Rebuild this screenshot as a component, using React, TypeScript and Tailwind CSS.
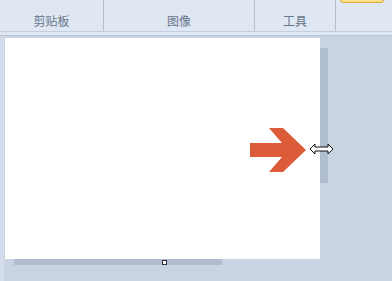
import React from 'react';

const groups = [
  { label: '剪贴板', w: 'w-[104px]' },
  { label: '图像', w: 'w-[151px]' },
  { label: '工具', w: 'w-[81px]' },
  { label: '', w: 'flex-1' },
];

const Ribbon = () => (
  <div className="h-[36px] bg-[#dfe7f2] border-b border-[#b9c6d8]">
    <div className="flex h-[32px] border-b border-[#c3cfdf]">
      {groups.map((g, i) => (
        <div
          key={i}
          className={`${g.w} relative flex items-end justify-center pb-[4px] ${i < 3 ? 'border-r border-[#b3c0d2]' : ''}`}
        >
          {i === 3 && (
            <div className="absolute left-[4px] top-[-6px] h-[9px] w-[44px] rounded-b-[3px] border border-[#d9a93a] bg-[#fbe08a]" />
          )}
          <span className="text-[12px] leading-none text-[#66768c] font-['Noto_Sans_CJK_SC',sans-serif]">{g.label}</span>
        </div>
      ))}
    </div>
  </div>
);

const Arrow = () => (
  <svg width="58" height="46" viewBox="249 127 58 46">
    <polygon
      points="250,143 282,143 269,128 283,128 306,150 283,172 269,172 282,157 250,157"
      fill="#dc5b38"
    />
  </svg>
);

const ResizeCursor = () => (
  <svg width="26" height="14" viewBox="0 0 26 14" className="absolute left-[60px] top-[15px]">
    <path
      d="M1 7 L6 2 L6 5 L19 5 L19 2 L24 7 L19 12 L19 9 L6 9 L6 12 Z"
      fill="#ffffff"
      stroke="#111"
      strokeWidth="1"
    />
  </svg>
);

export default function App() {
  return (
    <div className="w-[392px] h-[281px] overflow-hidden bg-[#c9d3e2] font-['Liberation_Sans',sans-serif]">
      <Ribbon />
      <div className="relative flex h-[245px]">
        <div className="w-[4px] bg-[#d3dcea]" />
        {/* shadows left over from the old canvas size */}
        <div className="absolute left-[320px] top-[12px] h-[135px] w-[8px] bg-[#b0bccf]" />
        <div className="absolute left-[14px] top-[223px] h-[6px] w-[208px] bg-[#b0bccf]" />
        <div className="ml-[1px] mt-[2px] flex h-[221px] w-[315px] items-center justify-end bg-white pr-[13px] pt-[3px]">
          <div className="relative">
            <Arrow />
            <ResizeCursor />
          </div>
        </div>
        <div className="absolute left-[162px] top-[224px] h-[5px] w-[5px] border border-[#333] bg-white" />
      </div>
    </div>
  );
}
